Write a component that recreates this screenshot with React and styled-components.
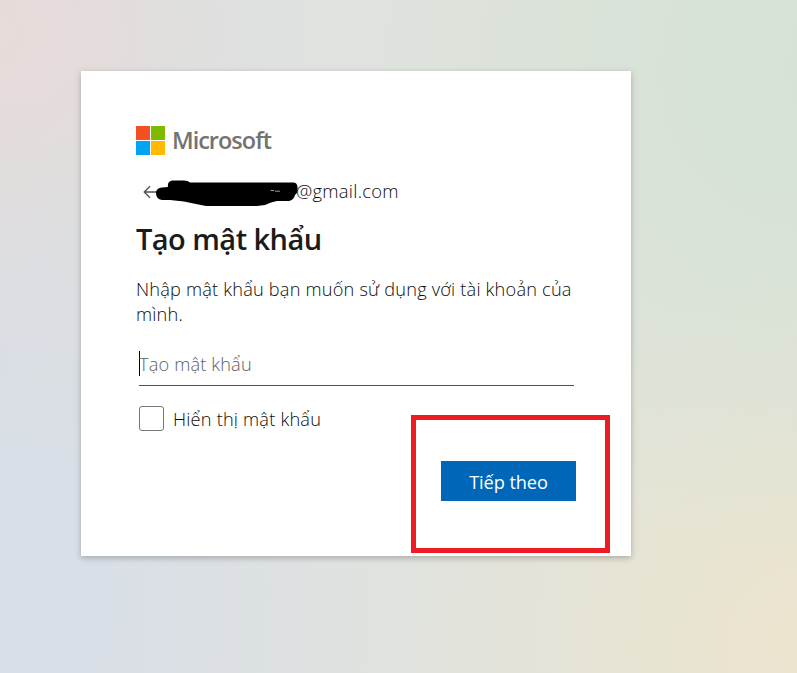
import styled, { createGlobalStyle } from "styled-components";

const GlobalStyle = createGlobalStyle`
  * {
    box-sizing: border-box;
  }
  body {
    margin: 0;
    overflow: hidden;
    font-family: "Open Sans", "Noto Sans", sans-serif;
    font-size: 18px;
    font-weight: 300;
    color: #0c0c0c;
  }
`;

const Page = styled.main`
  height: 673px;
  padding: 71px 0 0 81px;
  background:
    radial-gradient(circle at 0% 5%, #e8dbd9 0, rgba(232, 219, 217, 0) 240px),
    radial-gradient(ellipse 420px 480px at 100% 10%, #d5e2d6 0, rgba(213, 226, 214, 0) 100%),
    radial-gradient(ellipse 380px 420px at 0% 88%, #d7dfe9 0, rgba(215, 223, 233, 0) 100%),
    radial-gradient(ellipse 420px 400px at 102% 96%, #ece4ce 0, rgba(236, 228, 206, 0) 100%),
    linear-gradient(90deg, #dcdddf 0, #dfe2df 40%, #dfe3d9 100%);
`;

const Card = styled.section`
  display: flex;
  flex-direction: column;
  position: relative;
  width: 550px;
  height: 485px;
  padding: 55px;
  background-color: #fff;
  box-shadow: 0 2px 6px rgba(0, 0, 0, 0.25);
`;

const Brand = styled.div`
  display: flex;
  align-items: center;
  gap: 7px;
  height: 29px;
`;

const LogoGrid = styled.div`
  display: grid;
  grid-template-columns: 14px 14px;
  grid-template-rows: 14px 14px;
  gap: 1px;
`;

const Tile = styled.span`
  background-color: ${(props) => props.$color};
`;

const BrandName = styled.span`
  font-size: 23.5px;
  font-weight: 600;
  line-height: 29px;
  letter-spacing: -1px;
  color: #737373;
`;

const Identity = styled.div`
  position: relative;
  display: flex;
  align-items: center;
  height: 30px;
  margin-top: 22px;
  padding-left: 7px;
`;

const Email = styled.span`
  margin: -2px 0 0 138px;
  font-size: 18.4px;
  line-height: 30px;
  letter-spacing: 0.25px;
`;

const Redaction = styled.svg`
  position: absolute;
  left: 18px;
  top: 1px;
`;

const Title = styled.h1`
  margin: 14px 0 0;
  font-size: 29px;
  font-weight: 600;
  line-height: 36px;
  letter-spacing: -0.55px;
  color: #1b1b1b;
  white-space: nowrap;
`;

const Description = styled.p`
  margin: 20px -20px 0 0;
  font-size: 18.2px;
  line-height: 25px;
  letter-spacing: 0.19px;
`;

const Field = styled.div`
  display: flex;
  align-items: center;
  width: 435px;
  height: 45px;
  margin: 15px 0 0 3px;
  border-bottom: 1px solid #0067b8;
`;

const Caret = styled.span`
  width: 1px;
  height: 25px;
  margin-right: -1px;
  background-color: #000;
`;

const Placeholder = styled.span`
  font-size: 18.2px;
  letter-spacing: 0.15px;
  color: #606060;
`;

const CheckRow = styled.label`
  display: flex;
  align-items: center;
  gap: 9px;
  height: 25px;
  margin: 20px 0 0 3px;
  font-size: 18.2px;
  letter-spacing: 0.2px;
`;

const Checkbox = styled.span`
  width: 25px;
  height: 25px;
  border: 1px solid #767676;
  border-radius: 3px;
`;

const Highlight = styled.div`
  position: absolute;
  left: 330px;
  top: 344px;
  width: 199px;
  height: 138px;
  border: 5px solid #ed1c24;
`;

const NextButton = styled.button`
  align-self: flex-end;
  width: 135px;
  height: 40px;
  margin: 30px 0 0;
  padding: 1px 0 0;
  border: 0;
  background-color: #0067b8;
  color: #fff;
  font-family: inherit;
  font-size: 18.2px;
  letter-spacing: -0.1px;
`;

const tiles = ["#f25022", "#7fba00", "#00a4ef", "#ffb900"];

function App() {
  return (
    <Page>
      <GlobalStyle />
      <Card>
        <Brand>
          <LogoGrid>
            {tiles.map((color) => (
              <Tile key={color} $color={color} />
            ))}
          </LogoGrid>
          <BrandName>Microsoft</BrandName>
        </Brand>
        <Identity>
          <svg width="15" height="14" viewBox="0 0 15 14" fill="none" stroke="#505050" strokeWidth="1.3">
            <path d="M7 1.3 L1.2 7 L7 12.7 M1.2 7 H15" />
          </svg>
          <Email>@gmail.com</Email>
          <Redaction width="146" height="30" viewBox="0 0 146 30">
            <path d="M18 2.5 H30 Q34 2.5 36 4.5 H139 Q144 4.5 143.5 11 Q144 15 141 17 Q140 22 135 23 H123 Q117 24 111 27 L103 28 H52 L42 26 L30 23.5 L16 22 H8 Q2 21 2 15 Q2 10 8 9.5 L14 9 Q13 4 18 2.5 Z" />
            <path d="M116.5 12.5 H120 M121 13.2 H126" stroke="#999" strokeWidth="1" />
          </Redaction>
        </Identity>
        <Title>Tạo mật khẩu</Title>
        <Description>
          Nhập mật khẩu bạn muốn sử dụng với tài khoản của
          <br />
          mình.
        </Description>
        <Field>
          <Caret />
          <Placeholder>Tạo mật khẩu</Placeholder>
        </Field>
        <CheckRow>
          <Checkbox />
          Hiển thị mật khẩu
        </CheckRow>
        <NextButton>Tiếp theo</NextButton>
        <Highlight />
      </Card>
    </Page>
  );
}

export default App;
